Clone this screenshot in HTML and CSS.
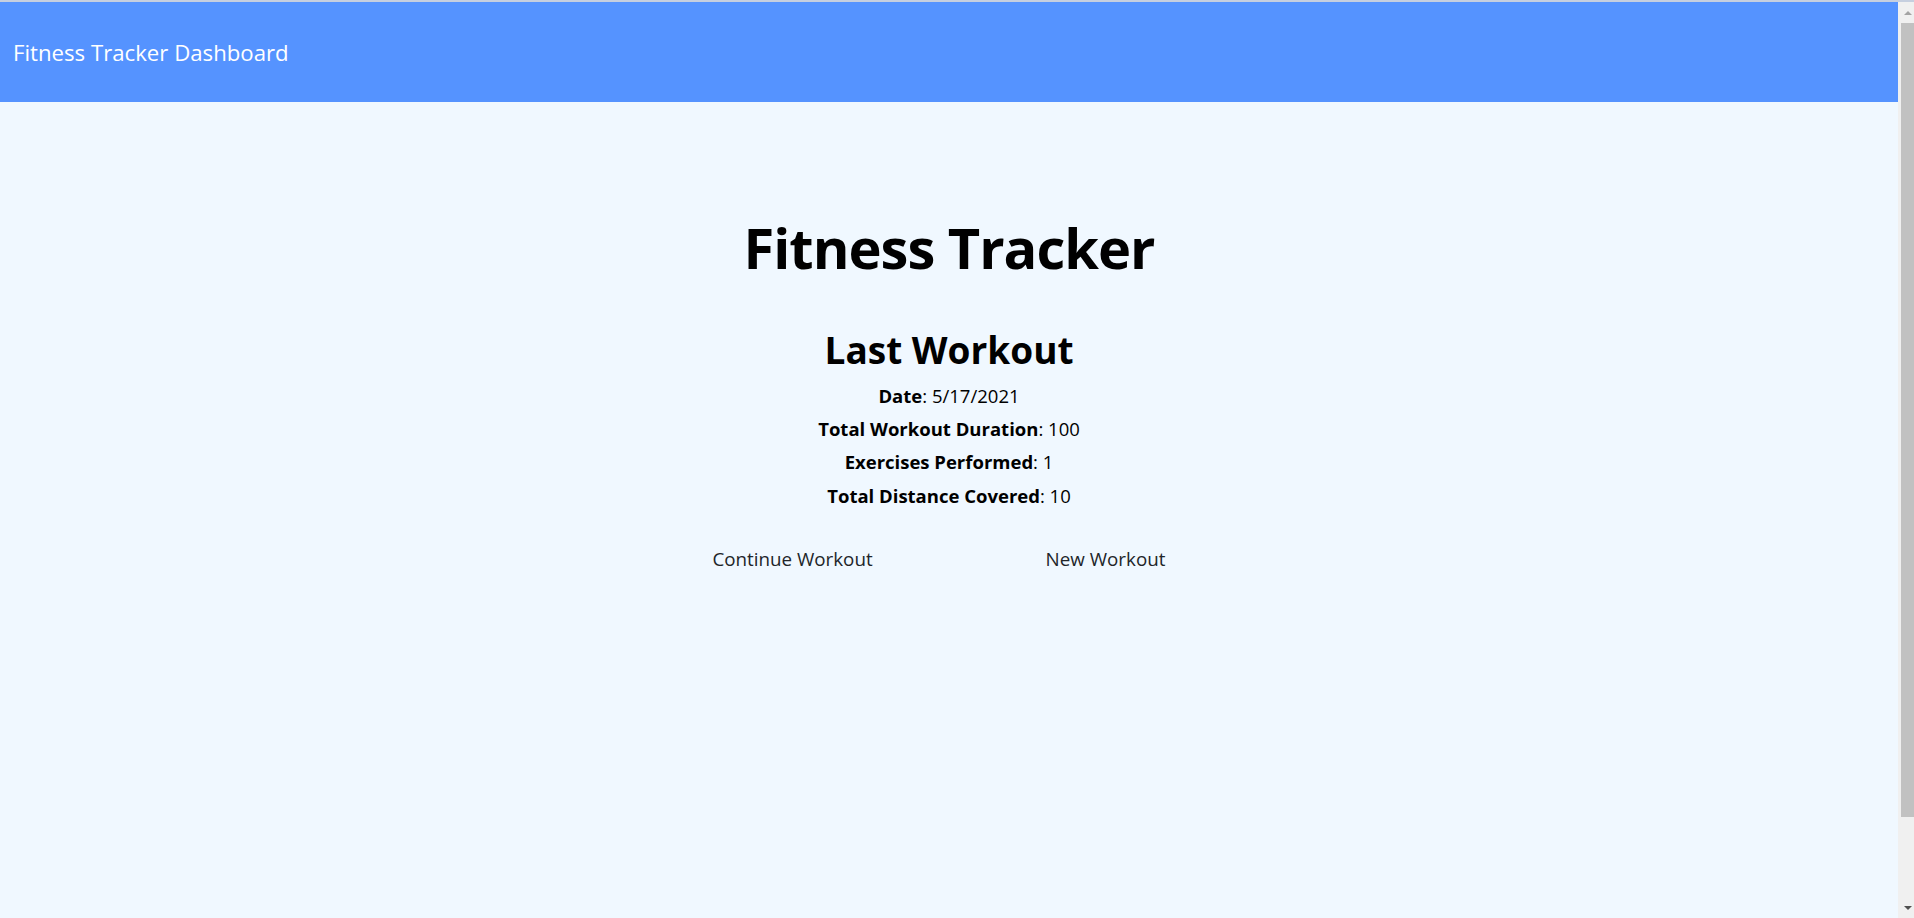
FILE: index.html
```html
<!DOCTYPE html>
<html lang="en">
<head>
<meta charset="utf-8">
<title>Fitness Tracker</title>
<link rel="stylesheet" href="styles.css">
</head>
<body>
<div class="frame-line"></div>
<div class="window">
  <div class="page">
    <header class="navbar">
      <span class="brand">Fitness Tracker Dashboard</span>
    </header>
    <main class="content">
      <h1 class="title">Fitness Tracker</h1>
      <h2 class="subtitle">Last Workout</h2>
      <div class="stats">
        <div class="stat"><strong>Date</strong>: 5/17/2021</div>
        <div class="stat"><strong>Total Workout Duration</strong>: 100</div>
        <div class="stat"><strong>Exercises Performed</strong>: 1</div>
        <div class="stat"><strong>Total Distance Covered</strong>: 10</div>
      </div>
      <div class="actions">
        <a class="btn">Continue Workout</a>
        <a class="btn">New Workout</a>
      </div>
    </main>
  </div>
  <div class="scrollbar">
    <div class="arrow arrow-up"></div>
    <div class="thumb"></div>
    <div class="track-rest"></div>
    <div class="arrow arrow-down"></div>
  </div>
</div>
</body>
</html>
```

FILE: styles.css
```css
html, body {
  margin: 0;
  padding: 0;
  height: 100%;
}
body {
  display: flex;
  flex-direction: column;
  background: #f0f8ff;
  font-family: "Open Sans", "Noto Sans", sans-serif;
  color: #000;
  overflow: hidden;
}
.frame-line {
  height: 2px;
  background: #c6cfdf;
  flex: none;
}
.window {
  flex: 1;
  display: flex;
  min-height: 0;
}
.page {
  flex: 1;
  display: flex;
  flex-direction: column;
}
.navbar {
  height: 100px;
  background: #5593ff;
  display: flex;
  align-items: center;
  padding-left: 13px;
  flex: none;
}
.brand {
  color: #fff;
  font-size: 22.2px;
  line-height: 30px;
  margin-top: 2px;
}
.content {
  display: flex;
  flex-direction: column;
  align-items: center;
  padding-top: 107px;
}
.title {
  margin: 0;
  font-size: 56px;
  letter-spacing: -1px;
  line-height: 76.8px;
  font-weight: 700;
}
.subtitle {
  margin: 40px 0 0;
  font-size: 37px;
  line-height: 48px;
  font-weight: 700;
}
.stats {
  margin-top: 5px;
  display: flex;
  flex-direction: column;
  align-items: center;
}
.stat {
  font-size: 18.5px;
  line-height: 33.3px;
}
.stat strong {
  font-weight: 700;
}
.actions {
  margin-top: 25px;
  display: flex;
}
.btn {
  width: 313px;
  text-align: center;
  padding: 7.5px 0;
  font-size: 18.8px;
  line-height: 30px;
  color: #212529;
}
.scrollbar {
  width: 16px;
  flex: none;
  display: flex;
  flex-direction: column;
  background: #f0f0f0;
  padding-left: 3px;
  box-sizing: border-box;
}
.arrow {
  height: 21px;
  flex: none;
  display: flex;
  justify-content: center;
  align-items: center;
}
.arrow-up::before {
  content: "";
  border-left: 4px solid transparent;
  border-right: 4px solid transparent;
  border-bottom: 4px solid #a3a3a3;
}
.arrow-down::before {
  content: "";
  border-left: 4px solid transparent;
  border-right: 4px solid transparent;
  border-top: 4px solid #505050;
}
.thumb {
  height: 794px;
  flex: none;
  background: #c1c1c1;
}
.track-rest {
  flex: 1;
}
```
